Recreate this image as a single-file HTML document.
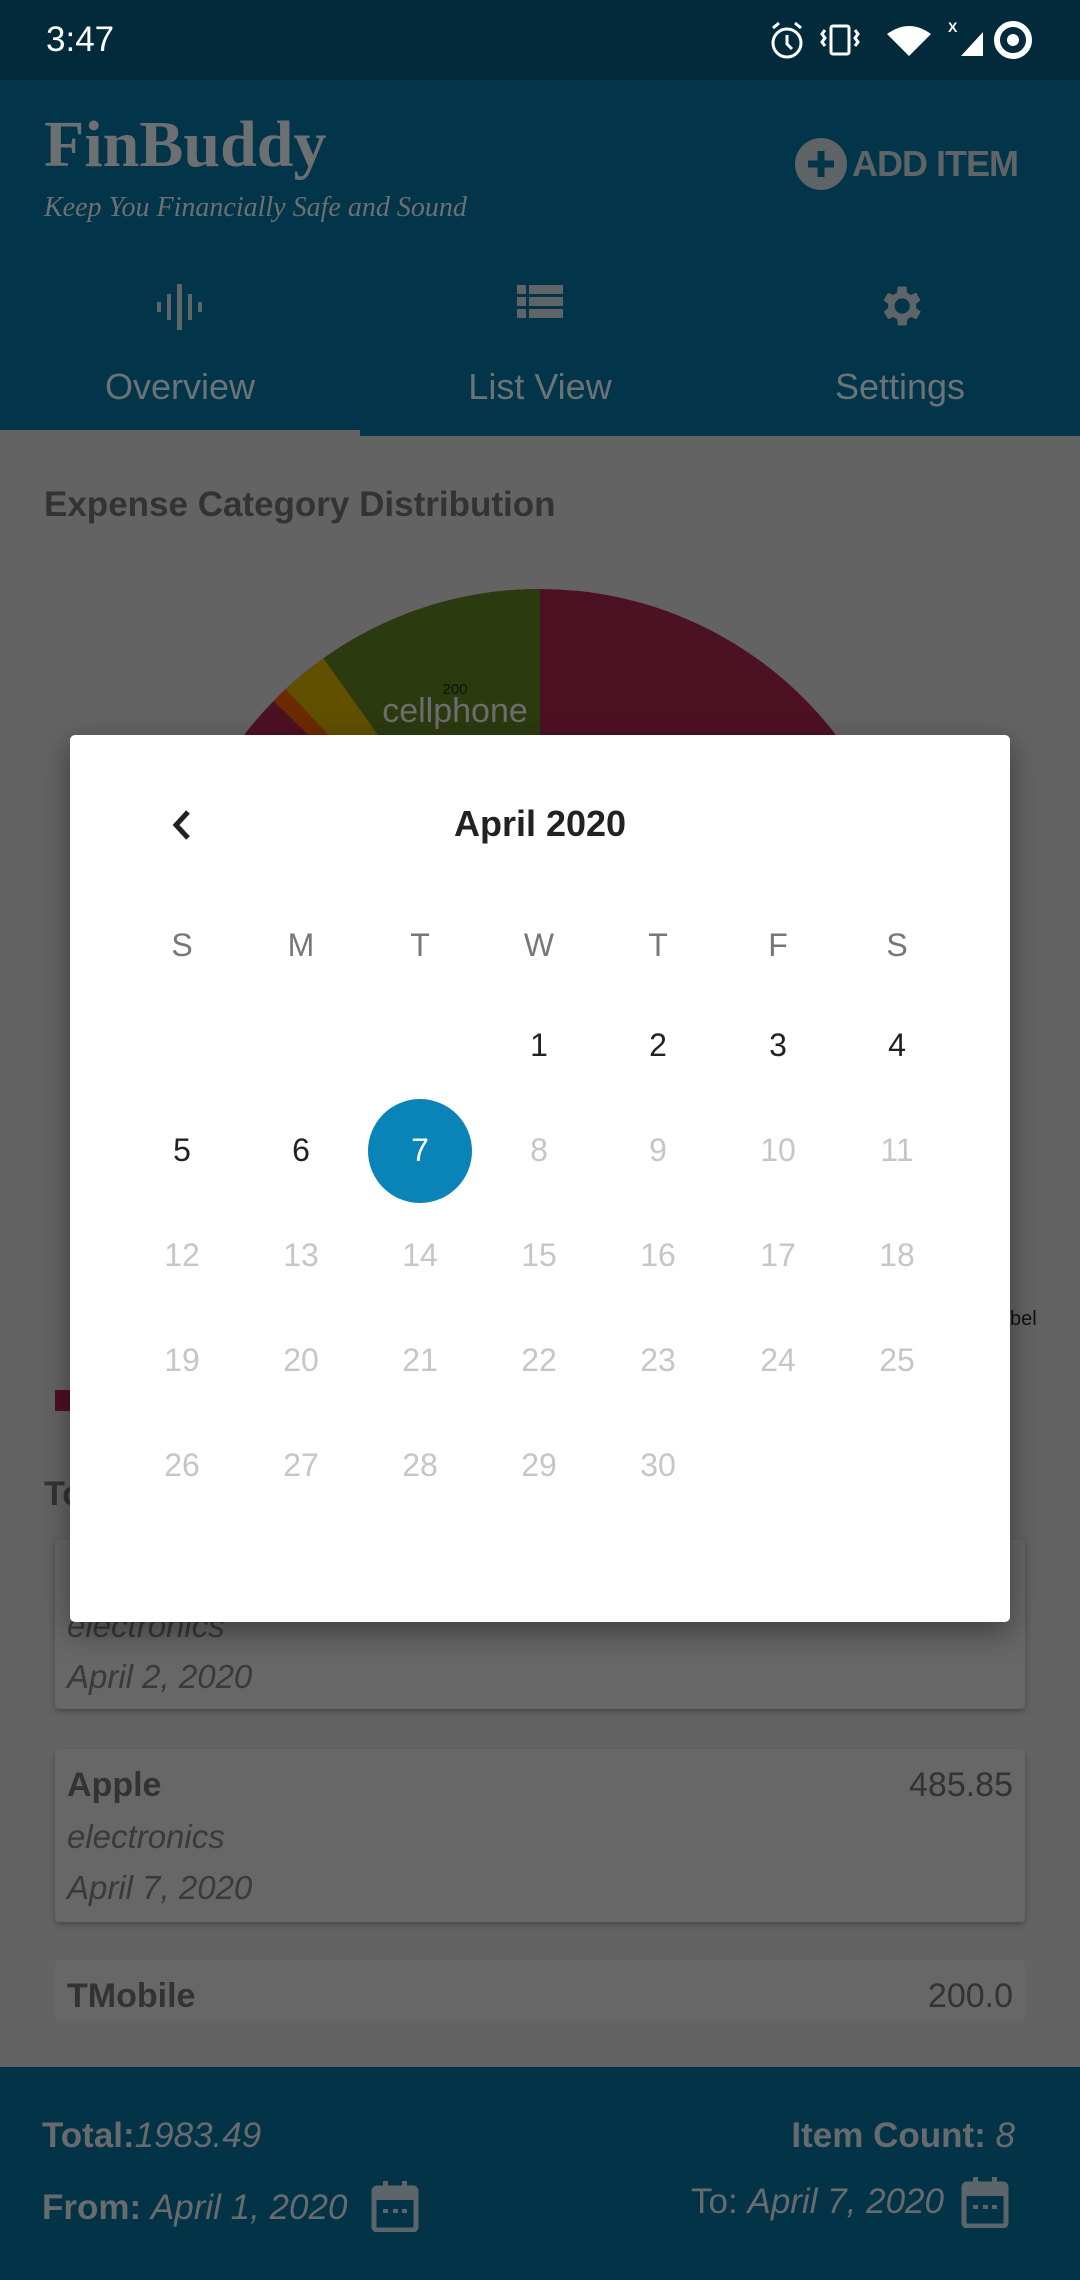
<!DOCTYPE html>
<html><head><meta charset="utf-8"><style>
*{margin:0;padding:0;box-sizing:border-box}
body{width:1080px;height:2280px;position:relative;overflow:hidden;background:#636363;font-family:"Liberation Sans",sans-serif}
.abs{position:absolute}
.sb{left:0;top:0;width:1080px;height:80px;background:#022a3a}
.ab{left:0;top:80px;width:1080px;height:356px;background:#03354a}
.g{color:#666a6c}
.t{white-space:nowrap}
.card{position:absolute;left:55px;width:970px;background:#676767;border-radius:4px;box-shadow:0 3px 6px rgba(0,0,0,.25)}
.dlg{left:70px;top:735px;width:940px;height:887px;background:#fff;border-radius:5px;box-shadow:0 10px 30px rgba(0,0,0,.4)}
.c{position:absolute;width:100px;margin-left:-50px;text-align:center;font-size:32px;line-height:40px}
</style></head><body>
<div class="abs sb"></div>
<div class="abs t" style="left:46px;top:20px;font-size:35px;color:#fff">3:47</div>
<svg class="abs" style="left:765px;top:18px" width="290" height="44" viewBox="0 0 290 44" fill="none" stroke="#fff" stroke-width="3">
<circle cx="22" cy="25" r="14"/><path d="M22 17v9l5 5M8 10l6-5M36 10l-6-5"/>
<rect x="66" y="8" width="18" height="28" rx="2"/><path d="M60 12l-3 4 3 4-3 4 3 4M90 12l3 4-3 4 3 4-3 4"/>
<path d="M122 16q22-16 44 0l-22 22z" fill="#fff" stroke="none"/>
<path d="M196 38l22-24v24z" fill="#fff" stroke="none"/><text x="183" y="14" fill="#fff" stroke="none" font-size="14" font-family="Liberation Sans" font-weight="bold">X</text>
<circle cx="248" cy="22" r="16" stroke-width="6"/><circle cx="248" cy="22" r="6" fill="#fff" stroke="none"/>
</svg>
<div class="abs ab"></div>
<div class="abs t g" style="left:44px;top:110px;font-family:'Liberation Serif',serif;font-weight:bold;font-size:66px;line-height:70px;color:#6d7072">FinBuddy</div>
<div class="abs t g" style="left:44px;top:192px;font-family:'Liberation Serif',serif;font-style:italic;font-size:28px;color:#6d7072">Keep You Financially Safe and Sound</div>
<svg class="abs" style="left:795px;top:138px" width="52" height="52"><circle cx="26" cy="26" r="26" fill="#5f6467"/><path d="M26 13v26M13 26h26" stroke="#03354a" stroke-width="7"/></svg>
<div class="abs t" style="left:852px;top:143px;font-size:36px;font-weight:bold;color:#5f6467;letter-spacing:-1px">ADD ITEM</div>
<svg class="abs" style="left:155px;top:282px" width="50" height="50" fill="#5f6467"><rect x="2" y="20" width="4" height="10"/><rect x="12" y="12" width="4" height="26"/><rect x="22" y="2" width="5" height="46"/><rect x="33" y="12" width="4" height="26"/><rect x="43" y="20" width="4" height="10"/></svg>
<svg class="abs" style="left:517px;top:285px" width="46" height="40" fill="#5f6467"><rect x="0" y="0" width="9" height="9"/><rect x="12" y="0" width="34" height="9"/><rect x="0" y="12" width="9" height="9"/><rect x="12" y="12" width="34" height="9"/><rect x="0" y="24" width="9" height="9"/><rect x="12" y="24" width="34" height="9"/></svg>
<svg class="abs" style="left:874px;top:280px" width="52" height="52" viewBox="0 0 24 24" fill="#5f6467"><path d="M19.4 13a7.5 7.5 0 000-2l2.1-1.6-2-3.5-2.5 1a7 7 0 00-1.7-1L15 3h-4l-.4 2.9a7 7 0 00-1.7 1l-2.5-1-2 3.5L6.6 11a7.5 7.5 0 000 2l-2.1 1.6 2 3.5 2.5-1a7 7 0 001.7 1L11 21h4l.4-2.9a7 7 0 001.7-1l2.5 1 2-3.5zM13 15.5a3.5 3.5 0 110-7 3.5 3.5 0 010 7z"/></svg>
<div class="abs t g" style="left:0;width:360px;text-align:center;top:366px;font-size:36px;color:#6a7375">Overview</div>
<div class="abs t g" style="left:360px;width:360px;text-align:center;top:366px;font-size:36px;color:#6a7375">List View</div>
<div class="abs t g" style="left:720px;width:360px;text-align:center;top:366px;font-size:36px;color:#6a7375">Settings</div>
<div class="abs" style="left:0;top:430px;width:360px;height:6px;background:#636363"></div>
<div class="abs t" style="left:44px;top:485px;font-size:35px;font-weight:bold;color:#333">Expense Category Distribution</div>
<svg class="abs" style="left:0;top:580px" width="1080" height="160">
<g transform="translate(0,-580)">
<circle cx="540" cy="962" r="373" fill="#4d1124"/>
<path d="M540 962L540 589A373 373 0 0 0 323.4 658.3Z" fill="#2c3a0f"/>
<path d="M540 962L323.4 658.3A373 373 0 0 0 285.6 689.2Z" fill="#605000"/>
<path d="M540 962L285.6 689.2A373 373 0 0 0 273.5 701Z" fill="#6b2a00"/>
<text x="455" y="694" font-size="15" font-family="Liberation Sans" text-anchor="middle" fill="#111">200</text>
<text x="455" y="722" font-size="34" font-family="Liberation Sans" text-anchor="middle" fill="#6d6d6d">cellphone</text>
</g></svg>
<div class="abs" style="left:55px;top:1390px;width:15px;height:21px;background:#4d1124"></div>
<div class="abs t" style="left:1010px;top:1308px;font-size:20px;color:#111">bel</div>
<div class="abs t" style="left:44px;top:1475px;font-size:34px;font-weight:bold;color:#333">To</div>
<div class="card" style="top:1540px;height:169px"></div>
<div class="abs t" style="left:67px;top:1607px;font-size:33px;font-style:italic;color:#3a3a3a">electronics</div>
<div class="abs t" style="left:67px;top:1658px;font-size:33px;font-style:italic;color:#3a3a3a">April 2, 2020</div>
<div class="card" style="top:1749px;height:173px"></div>
<div class="abs t" style="left:67px;top:1766px;font-size:34px;font-weight:bold;color:#333">Apple</div>
<div class="abs t" style="right:67px;top:1766px;font-size:34px;color:#333">485.85</div>
<div class="abs t" style="left:67px;top:1818px;font-size:33px;font-style:italic;color:#3a3a3a">electronics</div>
<div class="abs t" style="left:67px;top:1869px;font-size:33px;font-style:italic;color:#3a3a3a">April 7, 2020</div>
<div class="card" style="top:1960px;height:60px;border-radius:4px 4px 0 0;box-shadow:none"></div>
<div class="abs t" style="left:67px;top:1977px;font-size:34px;font-weight:bold;color:#333">TMobile</div>
<div class="abs t" style="right:67px;top:1977px;font-size:34px;color:#333">200.0</div>
<div class="abs" style="left:0;top:2067px;width:1080px;height:213px;background:#033346"></div>
<div class="abs t" style="left:42px;top:2116px;font-size:35px;color:#686b6d"><b>Total:</b><i>1983.49</i></div>
<div class="abs t" style="left:42px;top:2188px;font-size:35px;color:#686b6d"><b>From:</b> <i>April 1, 2020</i></div>
<div class="abs t" style="right:65px;top:2116px;font-size:35px;color:#686b6d"><b>Item Count:</b> <i>8</i></div>
<div class="abs t" style="right:136px;top:2182px;font-size:35px;color:#686b6d">To: <i>April 7, 2020</i></div>
<svg class="abs" style="left:371px;top:2180px" width="48" height="52"><rect x="3" y="8" width="42" height="42" rx="3" fill="none" stroke="#5c6569" stroke-width="5"/><rect x="3" y="8" width="42" height="12" fill="#5c6569"/><rect x="12" y="1" width="5" height="9" fill="#5c6569"/><rect x="31" y="1" width="5" height="9" fill="#5c6569"/><rect x="12" y="29" width="5" height="4" fill="#5c6569"/><rect x="22" y="29" width="5" height="4" fill="#5c6569"/><rect x="31" y="29" width="5" height="4" fill="#5c6569"/></svg>
<svg class="abs" style="left:961px;top:2176px" width="48" height="52"><rect x="3" y="8" width="42" height="42" rx="3" fill="none" stroke="#5c6569" stroke-width="5"/><rect x="3" y="8" width="42" height="12" fill="#5c6569"/><rect x="12" y="1" width="5" height="9" fill="#5c6569"/><rect x="31" y="1" width="5" height="9" fill="#5c6569"/><rect x="12" y="29" width="5" height="4" fill="#5c6569"/><rect x="22" y="29" width="5" height="4" fill="#5c6569"/><rect x="31" y="29" width="5" height="4" fill="#5c6569"/></svg>

<div class="abs dlg"></div>
<svg class="abs" style="left:168px;top:808px" width="28" height="34"><path d="M20 4L8 17l12 13" fill="none" stroke="#222" stroke-width="5"/></svg>
<div class="abs t" style="left:340px;width:400px;text-align:center;top:803px;font-size:36px;font-weight:bold;color:#222">April 2020</div>
<div style="position:absolute;left:0;top:0;color:#777">
<div class="c" style="left:182px;top:925px">S</div><div class="c" style="left:301px;top:925px">M</div><div class="c" style="left:420px;top:925px">T</div><div class="c" style="left:539px;top:925px">W</div><div class="c" style="left:658px;top:925px">T</div><div class="c" style="left:778px;top:925px">F</div><div class="c" style="left:897px;top:925px">S</div>
</div>
<div style="position:absolute;left:0;top:0;color:#222">
<div class="c" style="left:539px;top:1025px">1</div><div class="c" style="left:658px;top:1025px">2</div><div class="c" style="left:778px;top:1025px">3</div><div class="c" style="left:897px;top:1025px">4</div>
<div class="c" style="left:182px;top:1130px">5</div><div class="c" style="left:301px;top:1130px">6</div>
</div>
<div class="abs" style="left:368px;top:1099px;width:104px;height:104px;border-radius:50%;background:#0a83b6"></div>
<div class="c" style="left:420px;top:1130px;color:#fff">7</div>
<div style="position:absolute;left:0;top:0;color:#c6c6c6">
<div class="c" style="left:539px;top:1130px">8</div><div class="c" style="left:658px;top:1130px">9</div><div class="c" style="left:778px;top:1130px">10</div><div class="c" style="left:897px;top:1130px">11</div>
<div class="c" style="left:182px;top:1235px">12</div><div class="c" style="left:301px;top:1235px">13</div><div class="c" style="left:420px;top:1235px">14</div><div class="c" style="left:539px;top:1235px">15</div><div class="c" style="left:658px;top:1235px">16</div><div class="c" style="left:778px;top:1235px">17</div><div class="c" style="left:897px;top:1235px">18</div>
<div class="c" style="left:182px;top:1340px">19</div><div class="c" style="left:301px;top:1340px">20</div><div class="c" style="left:420px;top:1340px">21</div><div class="c" style="left:539px;top:1340px">22</div><div class="c" style="left:658px;top:1340px">23</div><div class="c" style="left:778px;top:1340px">24</div><div class="c" style="left:897px;top:1340px">25</div>
<div class="c" style="left:182px;top:1445px">26</div><div class="c" style="left:301px;top:1445px">27</div><div class="c" style="left:420px;top:1445px">28</div><div class="c" style="left:539px;top:1445px">29</div><div class="c" style="left:658px;top:1445px">30</div>
</div>
</body></html>
